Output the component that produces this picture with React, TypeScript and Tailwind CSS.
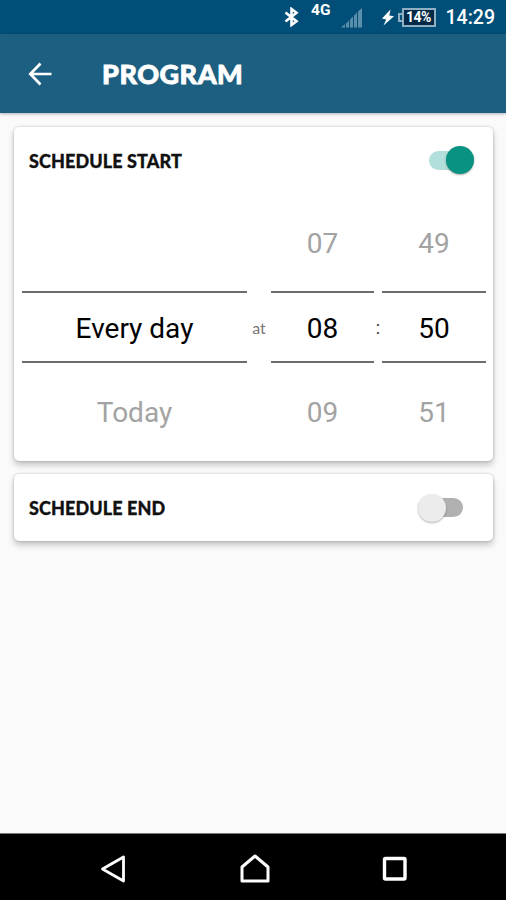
import React from "react";

interface PickerProps {
  previous?: string;
  value: string;
  next: string;
  className: string;
}

function Picker({ previous, value, next, className }: PickerProps) {
  return (
    <div
      className={`flex flex-col text-center font-[Roboto,sans-serif] text-[28px] leading-8 ${className}`}
    >
      <div className="h-[97.5px] pt-[35px] text-[#a3a3a3]">{previous}</div>
      <div className="h-[72px] border-y-2 border-[#6c6c6c] pt-[20px] text-black">
        {value}
      </div>
      <div className="pt-[34px] text-[#a3a3a3]">{next}</div>
    </div>
  );
}

function Toggle({ checked }: { checked: boolean }) {
  return (
    <button
      role="switch"
      aria-checked={checked}
      className={`flex h-7 w-[46px] items-center ${checked ? "justify-end" : "justify-start"}`}
    >
      <span
        className={`h-[19px] rounded-full ${
          checked
            ? "-mr-[28px] w-[45px] bg-[#b2dfd9]"
            : "order-2 -ml-[28px] w-[45px] bg-[#b1b1b1]"
        }`}
      />
      <span
        className={`relative z-10 size-7 shrink-0 rounded-full ${
          checked
            ? "bg-[#079282] shadow-[0_1px_2px_rgba(0,0,0,0.35)]"
            : "bg-[#ececec] shadow-[0_1px_2px_rgba(0,0,0,0.3)]"
        }`}
      />
    </button>
  );
}

function StatusBar() {
  return (
    <div className="flex h-[34px] items-center justify-end bg-[#014f78] pr-[11px] font-[Roboto,sans-serif] text-white">
      <svg width="15" height="20" viewBox="0 0 15 20" className="mr-[12px] fill-none stroke-white stroke-[2.6]">
        <path d="M1.5 5.5 12.5 14.3 7.5 18V2L12.5 5.7 1.5 14.5" />
      </svg>
      <span className="mr-[10px] mb-[14px] text-[15.5px] leading-4 font-bold">4G</span>
      <svg width="21" height="21" viewBox="0 0 21 21" className="mt-[3px] mr-[20px] fill-[#5a8eaa]">
        <path d="M0 19.5 4 16v3.5zM5 15.5l3-3v7H5zM9 11.5l3-3v11H9zM13 7.5l3-3v15h-3zM17 3.5l4-3.5v19.5h-4z" />
      </svg>
      <svg width="12" height="17" viewBox="0 0 12 17" className="mr-[4px] fill-white">
        <path d="M8.5.5 0 9.5l4.2.9L1.5 16.5 12 7.3 7.3 6.4z" />
      </svg>
      <span className="h-[9px] w-[4px] border-y-2 border-l-2 border-[#8fb0c3]" />
      <span className="mr-[10px] flex h-[19px] w-[34px] items-center justify-center border-2 border-[#8fb0c3] bg-[#042a48] text-[14px] font-bold tracking-[-0.5px]">
        14%
      </span>
      <span className="mt-px text-[19.5px] font-medium">14:29</span>
    </div>
  );
}

function NavigationBar() {
  return (
    <div className="flex h-[67px] items-center justify-between border-t border-[#777] bg-black pr-[98px] pl-[100px] pt-[3px]">
      <svg width="27" height="30" viewBox="0 0 27 30" className="fill-none stroke-white stroke-[2.8]">
        <path d="M23.5 3v24L2.5 15z" strokeLinejoin="round" />
      </svg>
      <svg width="30" height="30" viewBox="0 0 30 30" className="fill-none stroke-white stroke-3">
        <path d="M2 13 15 2l13 11v14H2z" strokeLinejoin="round" />
      </svg>
      <svg width="26" height="26" viewBox="0 0 26 26" className="fill-none stroke-white stroke-[3.4]">
        <rect x="2.5" y="2.5" width="20.5" height="20.5" rx="1" />
      </svg>
    </div>
  );
}

const cardClass =
  "rounded-[5px] bg-white shadow-[0_4px_6px_rgba(0,0,0,0.22),0_0_3px_rgba(0,0,0,0.2)]";
const headingClass =
  "pt-px font-[Lato,sans-serif] text-[18px] leading-6 font-black tracking-[0.1px] text-[#111] [-webkit-text-stroke:0.3px_#111]";

export default function App() {
  return (
    <div className="flex h-[900px] w-[506px] flex-col overflow-hidden bg-[#fafafa]">
      <StatusBar />
      <header className="z-10 flex h-[79px] items-center bg-[#1d5f80] pl-[28px] text-white shadow-[0_1px_3px_rgba(0,0,0,0.3)]">
        <svg width="24" height="24" viewBox="0 0 24 24" className="fill-none stroke-white stroke-[2.7]">
          <path d="M23.5 12H2.5M12.5 1.5 2.3 12l10.2 10.5" />
        </svg>
        <h1 className="mt-px ml-[50px] font-[Lato,sans-serif] text-[27px] font-black tracking-[0.5px] [-webkit-text-stroke:0.8px_white]">
          PROGRAM
        </h1>
      </header>
      <main className="flex flex-1 flex-col gap-[13px] pt-[14px] pr-[13px] pl-[14px]">
        <section className={`h-[334px] ${cardClass}`}>
          <div className="flex h-[66px] items-center justify-between pr-[19px] pl-[15px]">
            <h2 className={headingClass}>SCHEDULE START</h2>
            <Toggle checked />
          </div>
          <div className="flex pl-2">
            <Picker className="w-[225px]" value="Every day" next="Today" />
            <div className="w-6 pt-[123px] text-center font-[Lato,sans-serif] text-[16px] text-[#777]">
              at
            </div>
            <Picker className="w-[103px]" previous="07" value="08" next="09" />
            <div className="w-2 pt-[121px] text-center font-[Roboto,sans-serif] text-[18px] text-[#333]">
              :
            </div>
            <Picker className="w-[104px]" previous="49" value="50" next="51" />
          </div>
        </section>
        <section className={`flex h-[67px] items-center justify-between pr-[29px] pl-[15px] ${cardClass}`}>
          <h2 className={headingClass}>SCHEDULE END</h2>
          <Toggle checked={false} />
        </section>
      </main>
      <NavigationBar />
    </div>
  );
}
